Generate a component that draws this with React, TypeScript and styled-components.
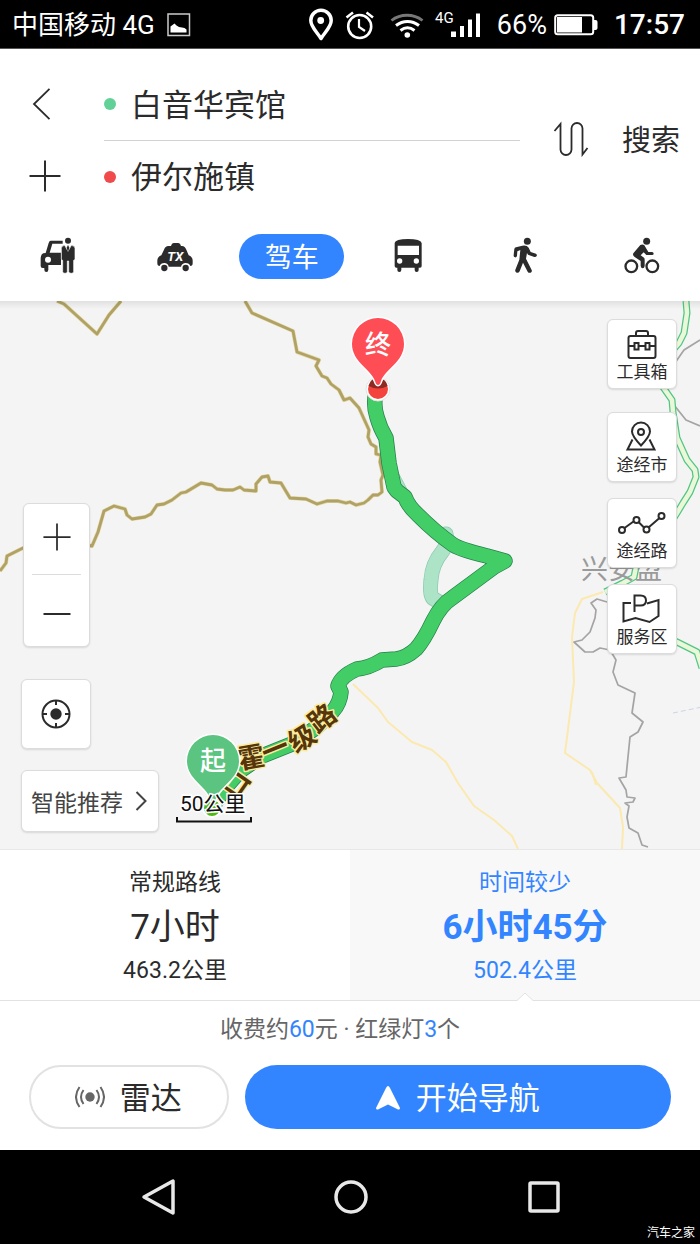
import React, { useState } from "react";
import styled, { createGlobalStyle, css } from "styled-components";

const GlobalStyle = createGlobalStyle`
  * { box-sizing: border-box; }
  body {
    margin: 0;
    background: #fff;
    color: #2b2b2b;
    font-family: Roboto, "Noto Sans CJK SC", sans-serif;
  }
  button, input {
    margin: 0;
    padding: 0;
    border: 0;
    background: none;
    color: inherit;
    font: inherit;
  }
  button { cursor: pointer; }
  svg { display: block; flex: none; }
`;

const blue = "#3385ff";
const ink = "#2b2b2b";

const Screen = styled.div`
  display: flex;
  flex-direction: column;
  min-height: 100vh;
`;

/* ---------- status bar ---------- */

const StatusBar = styled.div`
  display: flex;
  align-items: center;
  justify-content: space-between;
  height: 49px;
  padding: 2px 15px 0 12px;
  background: #000;
  color: #fff;
  border-bottom: 1px solid #555;
`;

const StatusGroup = styled.div`
  display: flex;
  align-items: center;
`;

const Carrier = styled.span`
  margin-right: 12px;
  font-size: 26px;
  line-height: 46px;
`;

const Battery = styled.span`
  margin: 0 7px 0 15px;
  font-size: 27px;
  line-height: 46px;
`;

const Clock = styled.time`
  margin-left: 16px;
  font-size: 28px;
  font-weight: 500;
  line-height: 46px;
`;

/* ---------- search header ---------- */

const Header = styled.header`
  display: flex;
  padding: 19px 20px 0 0;
`;

const SideActions = styled.div`
  display: flex;
  flex-direction: column;
  width: 104px;
`;

const SideButton = styled.button`
  display: flex;
  align-items: center;
  height: 72px;
  padding-left: 29px;
`;

const Fields = styled.div`
  flex: 1;
  min-width: 0;
`;

const Field = styled.label<{ $divided?: boolean }>`
  display: flex;
  align-items: center;
  height: ${(p) => (p.$divided ? 73 : 71)}px;
  gap: 15px;
  border-bottom: ${(p) => (p.$divided ? "1px solid #d2d2d2" : "0")};
`;

const Dot = styled.span<{ $color: string }>`
  flex: none;
  width: 12px;
  height: 12px;
  border-radius: 50%;
  background: ${(p) => p.$color};
`;

const PlaceInput = styled.input`
  flex: 1;
  min-width: 0;
  height: 60px;
  padding-bottom: 4px;
  font-size: 31px;
  outline: none;
`;

const SwapButton = styled.button`
  display: flex;
  align-items: center;
  justify-content: center;
  width: 102px;
  padding-bottom: 2px;
`;

const SearchButton = styled.button`
  padding-bottom: 4px;
  font-size: 29px;
  white-space: nowrap;
`;

/* ---------- travel modes ---------- */

const Modes = styled.nav`
  display: grid;
  grid-template-columns: repeat(6, 1fr);
  align-items: center;
  justify-items: center;
  height: 89px;
  padding-bottom: 1px;
`;

const ModeButton = styled.button<{ $active?: boolean }>`
  display: flex;
  align-items: center;
  justify-content: center;
  height: 45px;
  ${(p) =>
    p.$active &&
    css`
      width: 105px;
      padding-bottom: 2px;
      border-radius: 23px;
      background: ${blue};
      color: #fff;
      font-size: 27px;
    `}
`;

/* ---------- map ---------- */

const MapArea = styled.main`
  position: relative;
  display: flex;
  flex: 1;
  justify-content: space-between;
  min-height: 548px;
  padding: 18px 23px 17px 21px;
  background: #f4f4f4;

  &::before {
    content: "";
    position: absolute;
    inset: 0 0 auto 0;
    z-index: 1;
    height: 8px;
    background: linear-gradient(rgba(0, 0, 0, 0.08), rgba(0, 0, 0, 0));
  }
`;

const MapCanvas = styled.svg`
  position: absolute;
  inset: 0;
  width: 100%;
  height: 100%;
`;

const Column = styled.div<{ $end?: boolean }>`
  position: relative;
  display: flex;
  flex-direction: column;
  justify-content: ${(p) => (p.$end ? "flex-end" : "flex-start")};
  align-items: flex-start;
`;

const card = css`
  background: #fff;
  border: 1px solid #dcdcdc;
  border-radius: 6px;
  box-shadow: 0 1px 2px rgba(0, 0, 0, 0.12);
`;

const ZoomCard = styled.div`
  ${card}
  display: flex;
  flex-direction: column;
  width: 67px;
  height: 144px;
  margin: 0 0 32px 2px;
  padding: 0 8px;
`;

const ZoomButton = styled.button`
  display: flex;
  align-items: center;
  justify-content: center;
  height: 70px;
  padding-bottom: 4px;
  & + & {
    height: 72px;
    padding: 7px 0 0;
    border-top: 1px solid #dcdcdc;
  }
`;

const LocateButton = styled.button`
  ${card}
  display: flex;
  align-items: center;
  justify-content: center;
  width: 70px;
  height: 70px;
  margin-bottom: 21px;
`;

const SmartButton = styled.button`
  ${card}
  display: flex;
  align-items: center;
  gap: 12px;
  height: 62px;
  padding: 0 11px 0 9px;
  color: #444;
  font-size: 23px;
  white-space: nowrap;
`;

const ToolButton = styled.button`
  ${card}
  display: flex;
  flex-direction: column;
  align-items: center;
  width: 70px;
  height: 70px;
  margin-bottom: 16px;
  padding-top: 8px;
  font-size: 17px;
  line-height: 24px;
  &:first-child { margin-bottom: 23px; }
`;

/* ---------- route choice ---------- */

const Routes = styled.section`
  display: grid;
  grid-template-columns: 1fr 1fr;
  border-top: 1px solid #e8e8e8;
  border-bottom: 1px solid #e2e2e2;
`;

const RouteOption = styled.button<{ $active?: boolean }>`
  position: relative;
  display: flex;
  flex-direction: column;
  align-items: center;
  padding: 16px 0 14px;
  background: ${(p) => (p.$active ? "#f8f8f8" : "#fff")};
  color: ${(p) => (p.$active ? blue : ink)};
  strong { font-weight: ${(p) => (p.$active ? 700 : 400)}; }
`;

const RouteName = styled.span`
  font-size: 23px;
  line-height: 34px;
`;

const RouteTime = styled.strong`
  font-size: 35px;
  line-height: 56px;
`;

const RouteDistance = styled.span`
  font-size: 23px;
  line-height: 30px;
`;

const Pointer = styled.svg`
  position: absolute;
  bottom: -1px;
  left: 50%;
  margin-left: -8px;
`;

const Summary = styled.p`
  margin: 0;
  padding: 1px 20px 0 0;
  color: #666;
  font-size: 23px;
  line-height: 56px;
  text-align: center;
  em {
    color: ${blue};
    font-style: normal;
  }
`;

const Actions = styled.div`
  display: grid;
  grid-template-columns: 8fr 17fr;
  gap: 16px;
  padding: 7px 29px 21px;
`;

const ActionButton = styled.button<{ $primary?: boolean }>`
  display: flex;
  align-items: center;
  justify-content: center;
  gap: 15px;
  height: 64px;
  padding-right: 2px;
  border: ${(p) => (p.$primary ? "0" : "2px solid #e2e2e2")};
  border-radius: 32px;
  background: ${(p) => (p.$primary ? blue : "#fff")};
  color: ${(p) => (p.$primary ? "#fff" : ink)};
  font-size: 31px;
  white-space: nowrap;
`;

const ActionLabel = styled.span`
  padding-bottom: 3px;
`;

/* ---------- system navigation ---------- */

const SystemNav = styled.footer`
  position: relative;
  display: grid;
  grid-template-columns: repeat(3, 1fr);
  align-items: center;
  height: 94px;
  padding: 0 60px 0 62px;
  background: #000;
`;

const SystemButton = styled.button`
  display: flex;
  justify-content: center;
`;

const Watermark = styled.span`
  position: absolute;
  right: 5px;
  bottom: 2px;
  color: #fff;
  font-size: 12px;
  line-height: 18px;
`;

/* ---------- icons ---------- */

const StatusIcons = () => (
  <svg width="174" height="40" viewBox="309 4 174 40" fill="none" stroke="#fff">
    <path d="M322 37.500C318 31 311.800 26 311.800 19.500a10.200 10.200 0 0 1 20.400 0C332.200 26 326 31 322 37.500z" strokeWidth="3.500" strokeLinejoin="round" />
    <circle cx="321.700" cy="19.500" r="3.400" fill="#fff" stroke="none" />
    <circle cx="360.700" cy="25.500" r="11.500" strokeWidth="2.600" />
    <path d="M360 18v8l6 4" strokeWidth="2.200" />
    <path d="M347.500 16.500l6.500-5M374 16.500l-6.500-5" strokeWidth="2.600" />
    <path d="M392.500 19.500c9-7 22-7 31 0" stroke="#777" strokeWidth="2.800" />
    <path d="M397 24.500c7-5.500 16-5.500 23 0" strokeWidth="3" />
    <path d="M401.500 29.500c4.500-3.500 9.500-3.500 14 0" strokeWidth="3" />
    <circle cx="408.300" cy="34" r="2.800" fill="#fff" stroke="none" />
    <text x="436" y="22" fill="#fff" stroke="none" fontSize="15" fontFamily="Roboto, sans-serif">4G</text>
    <path d="M463 36V25M471 36V18.500" strokeWidth="4" />
    <path d="M479 36V12.500" strokeWidth="4" />
    <path d="M454.500 36V30.500" strokeWidth="5" />
  </svg>
);

const PictureIcon = () => (
  <svg width="24" height="24" viewBox="0 0 24 24">
    <rect x="1" y="1" width="21.500" height="21.500" fill="none" stroke="#ccc" strokeWidth="1.500" />
    <path d="M3.500 19.500v-6l2-1.500 2-1.500 2 2 2.500 1.500 3 .5 2.500.5 2 1.500v3z" fill="#fff" />
  </svg>
);

const BatteryIcon = () => (
  <svg width="44" height="22" viewBox="0 0 44 22">
    <rect x="1.200" y="1.200" width="38" height="19" rx="2.500" fill="none" stroke="#fff" strokeWidth="2" />
    <rect x="3" y="3" width="25" height="15.500" fill="#fff" />
    <path d="M40 6h1.500a2 2 0 0 1 2 2v6a2 2 0 0 1-2 2H40z" fill="#fff" />
  </svg>
);

const BackIcon = () => (
  <svg width="32" height="32" viewBox="0 0 32 32" fill="none" stroke={ink} strokeWidth="1.800">
    <path d="M20.500 .800L5 16l15.500 15.200" />
  </svg>
);

const PlusIcon = ({ size }: { size: number }) => (
  <svg width={size} height={size} viewBox="0 0 32 32" fill="none" stroke={ink} strokeWidth="2">
    <path d="M16 .5v31M.5 16h31" />
  </svg>
);

const MinusIcon = () => (
  <svg width="28" height="28" viewBox="0 0 28 28" fill="none" stroke={ink} strokeWidth="2">
    <path d="M.5 14h27" />
  </svg>
);

const SwapIcon = () => (
  <svg width="36" height="36" viewBox="0 0 36 36" fill="none" stroke={ink} strokeWidth="1.800">
    <path d="M1.500 10L7.500 3v25.500a5.500 5.500 0 0 0 11 0V7.500a5.500 5.500 0 0 1 11 0V33.500l5-6.500" />
  </svg>
);

const ChauffeurIcon = () => (
  <svg width="40" height="40" viewBox="114 51 120 120" fill={ink}>
    <path d="M152 65h36v9h-31l-8 27h34v37h-38v14q0 7-6 7t-6-7v-5h-5q-6 0-6-6v-24q0-10 8-14l7-1 9-30q2-7 6-7z" />
    <circle cx="144" cy="122" r="9" fill="#fff" />
    <circle cx="204" cy="65" r="9" />
    <path d="M194 79l10 18 10-18q11 1 11 9v31q0 5-4 5v34q0 5-7 5t-8-5v-32h-4v32q0 5-7 5t-7-5v-34q-4 0-4-5V88q0-8 10-9z" stroke="#fff" strokeWidth="2" />
    <path d="M204 78l4 8-4 13-4-13z" />
  </svg>
);

const TaxiIcon = () => (
  <svg width="40" height="40" viewBox="465 51 120 120" fill={ink}>
    <path d="M513 81q2-9 8-9h14q6 0 8 9h3q9 1 13 11l7 17q11 4 12 15v9q0 8-7 8-3-9-14-9t-14 11h-37q-2-11-13-11t-14 9q-7 0-7-8v-9q1-11 12-15l8-17q4-11 13-11z" />
    <circle cx="493" cy="147" r="9.500" />
    <circle cx="557" cy="147" r="9.500" />
    <text x="502" y="127" fill="#fff" fontSize="39" fontWeight="700" fontStyle="italic" fontFamily="Roboto, sans-serif">TX</text>
  </svg>
);

const BusIcon = () => (
  <svg width="40" height="40" viewBox="115 51 120 120" fill={ink}>
    <path fillRule="evenodd" d="M135 72q2-12 40-12t41 12v69q0 5-5 5h-4v7q0 6-6 6t-6-6v-7h-40v7q0 6-6 6t-6-6v-7h-3q-5 0-5-5zM144 80v28h64V80z" />
    <circle cx="150" cy="126" r="8" fill="#fff" />
    <circle cx="200" cy="126" r="8" fill="#fff" />
  </svg>
);

const WalkIcon = () => (
  <svg width="40" height="40" viewBox="465 51 120 120" fill={ink}>
    <circle cx="532" cy="67" r="10.500" />
    <path d="M517 80q14-2 19 6l6 13 16 5q4 3 2 7-2 4-7 3l-19-7-3-5-3 17 17 34q2 6-3 8-6 2-9-3l-14-27-10 26q-4 6-9 4-6-3-4-9l12-30 3-29-9 4-1 14q-2 5-6 4-5-1-4-7l2-18q1-4 5-5z" />
  </svg>
);

const BikeIcon = () => (
  <svg width="40" height="40" viewBox="815 51 120 120" fill={ink}>
    <circle cx="889" cy="67" r="10.500" />
    <path d="M870 78q7-4 12 1l12 20h11q5 1 5 5t-5 4h-17l-8-8-9 9 10 7q2 2 2 6v19q-1 7-6 7t-6-7v-15l-18-12q-7-5-4-11z" />
    <circle cx="843" cy="142" r="17.500" fill="none" stroke={ink} strokeWidth="7" />
    <circle cx="906" cy="142" r="17.500" fill="none" stroke={ink} strokeWidth="7" />
  </svg>
);

const LocateIcon = () => (
  <svg width="32" height="32" viewBox="0 0 32 32" fill="none" stroke={ink} strokeWidth="2">
    <circle cx="16" cy="16" r="13.500" />
    <circle cx="16" cy="16" r="5.700" fill={ink} stroke="none" />
    <path d="M16 2v5M16 25v5M2 16h5M25 16h5" />
  </svg>
);

const ChevronIcon = () => (
  <svg width="12" height="22" viewBox="0 0 12 22" fill="none" stroke="#444" strokeWidth="2">
    <path d="M1.500 2l9 9-9 9" />
  </svg>
);

const ToolIcon = ({ children }: { children: React.ReactNode }) => (
  <svg width="48" height="32" viewBox="0 0 48 32" fill="none" stroke={ink} strokeWidth="2">
    {children}
  </svg>
);

const RadarIcon = () => (
  <svg width="30" height="22" viewBox="0 0 30 22" fill="none" stroke="#666" strokeWidth="2">
    <circle cx="15" cy="11" r="4.700" fill="#666" stroke="none" />
    <path d="M8.500 4q-5 7 0 14M4.500 1q-7 10 0 20M21.500 4q5 7 0 14M25.500 1q7 10 0 20" />
  </svg>
);

const NavigateIcon = () => (
  <svg width="26" height="26" viewBox="0 0 26 26" fill="#fff">
    <path d="M13 2q1 0 2 2l10 20q0 2-2 1.500L13 20.500 3 25.500Q1 26 1 24L11 4q1-2 2-2z" />
  </svg>
);

/* ---------- map drawing ---------- */

const tanRoads = [
  "M57 301L64 304 97 334 109 315 121 301",
  "M245 301L252 313 293 331 297 352 319 360 316 366 322 376 327 378 331 384 339 390 344 400 350 398 359 408 369 430 368 437 371 444 376 447 376 454 381 455 380 462 383 475 381 480 382 492 378 495 373 495 368 500 364 503 356 505 350 502 346 503 338 501 327 501 317 504 306 499 290 498 281 483 270 482 268 476 262 477 256 484 256 491 244 490 240 487 233 490 225 490 217 489 212 485 201 483 186 492 181 493 172 500 164 504 157 505 151 514 145 517 132 519 127 515 125 509 114 506 104 511 98 532 92 546 60 540 23 548 7 556 6 563 0 571",
];

const greenRoads = [
  "M686 301L687 313 684 333 679 343 673 350 660 370 658 380 665 390 672 400 673 412 677 438 687 460 695 470 696 477 690 492 683 503 677 513 660 540 636 567 634 577 623 583 605 592",
  "M650 630L677 642 697 652 702 668",
];

const grayRoads = [
  "M670 370L684 350 700 340",
  "M674 405L686 420 700 426",
  "M607 602L597 599 591 603 596 610 595 618 590 632 582 640 574 642 585 652 593 652 600 648 610 650 616 660 613 672 618 685 635 693 632 713 643 722 638 732 630 737 626 777 619 778 626 790 627 797 635 798 633 802 625 803 629 806 627 817 629 828 638 833 642 845 648 847",
];

const yellowRoads = [
  "M603 592L582 599 575 613 572 637 574 682 565 753 590 770 597 783 620 808 623 827 622 849",
  "M592 772L596 785",
  "M353 684L378 708 388 722 412 742 432 750 446 762 458 783 474 806 494 820 512 836 518 849",
];

const route =
  "M376 392Q373 405 377 417Q380 428 386 438L389 463 394 487 397 491 405 497Q408 506 418 515Q435 532 452 544Q458 549 487 556L505 561 494 567 452 598Q441 605 433 621Q424 640 416 649Q406 658 396 659L382 660Q369 668 357 669Q341 676 338 686L341 692Q340 703 333 711L317 727 292 744 262 756 240 771 225 788 212 808";

const detour = "M393 478L402 495M446 534Q448 545 442 552Q432 564 431 580Q429 597 434 599L444 605";

const roadName = [
  { char: "口", x: 236, y: 784, turn: -55 },
  { char: "霍", x: 251, y: 757, turn: -10 },
  { char: "一", x: 275, y: 749, turn: -22 },
  { char: "级", x: 302, y: 738, turn: -32 },
  { char: "路", x: 322, y: 718, turn: -38 },
];

const pinPath = "M0 41Q-2 41-3 37C-7 25-26 18-26 0a26 26 0 0 1 52 0C26 18 7 25 3 37Q2 41 0 41z";
const cjk = '"Noto Sans CJK SC", sans-serif';

const RouteMap = () => (
  <MapCanvas viewBox="0 301 700 548" preserveAspectRatio="xMidYMid slice" role="img" aria-label="路线地图">
    <g fill="none" strokeLinejoin="round">
      {yellowRoads.map((d) => <path key={d} d={d} stroke="#fbe9b0" strokeWidth="2" />)}
      {grayRoads.map((d) => <path key={d} d={d} stroke="#a5a3a3" strokeWidth="1.700" />)}
      {tanRoads.map((d) => (
        <g key={d}>
          <path d={d} stroke="#e4d9a4" strokeWidth="4" />
          <path d={d} stroke="#b0a266" strokeWidth="2.800" />
        </g>
      ))}
      {greenRoads.map((d) => (
        <g key={d}>
          <path d={d} stroke="#50c684" strokeWidth="7" />
          <path d={d} stroke="#eaf7d8" strokeWidth="4.500" />
        </g>
      ))}
      <path d="M673 713L702 707" stroke="#cdd5e2" strokeWidth="1" strokeDasharray="5 3" />
    </g>
    <text x="581" y="579" fontSize="27" fill="#9a9a9a" fontFamily={cjk}>兴安盟</text>
    <g fill="none" strokeLinejoin="round" strokeLinecap="round">
      <path d={detour} stroke="#8fcbb0" strokeWidth="15" />
      <path d={detour} stroke="#ade4c8" strokeWidth="13.500" />
      <path d={route} stroke="#26804b" strokeWidth="15.500" />
      <path d={route} stroke="#43cd67" strokeWidth="14" />
    </g>
    <g fontSize="27" fontWeight="700" fontFamily={cjk} textAnchor="middle" fill="#553509" stroke="#fbeb9c" strokeWidth="3" strokeLinejoin="round" paintOrder="stroke">
      {roadName.map((c) => (
        <text key={c.char} transform={`translate(${c.x} ${c.y}) rotate(${c.turn})`} y="10">{c.char}</text>
      ))}
    </g>
    <circle cx="378" cy="389" r="12" fill="#fff" stroke="#e4e4e4" />
    <circle cx="378" cy="389" r="10" fill="#f4433c" />
    <path d="M368.500 386q2-6 5-7h9q4 2 5 7-9 5-19 0z" fill="#8e2a24" />
    <g transform="translate(378 344)">
      <path d={pinPath} fill="#ff4d55" stroke="#fff" strokeWidth="3" paintOrder="stroke" />
      <text y="10" fontSize="26" fontWeight="500" fill="#fff" textAnchor="middle" fontFamily={cjk}>终</text>
    </g>
    <circle cx="212" cy="808" r="9" fill="#4cb812" stroke="#fff" strokeWidth="2" />
    <g transform="translate(213 761)">
      <path d={pinPath} fill="#5ac480" stroke="#fff" strokeWidth="3" paintOrder="stroke" />
      <text y="9" fontSize="26" fontWeight="500" fill="#fff" textAnchor="middle" fontFamily={cjk}>起</text>
    </g>
    <text x="180" y="811" fontSize="21" fill="#111" stroke="#fff" strokeWidth="3" paintOrder="stroke" fontFamily='Roboto, "Noto Sans CJK SC", sans-serif'>50公里</text>
    <path d="M177 817v4.500h74V817" fill="none" stroke="#111" strokeWidth="2" />
  </MapCanvas>
);

/* ---------- page ---------- */

const modes = [
  { label: "代驾", icon: <ChauffeurIcon /> },
  { label: "打车", icon: <TaxiIcon /> },
  { label: "驾车", icon: null },
  { label: "公交", icon: <BusIcon /> },
  { label: "步行", icon: <WalkIcon /> },
  { label: "骑行", icon: <BikeIcon /> },
];

const tools = [
  {
    label: "工具箱",
    icon: (
      <ToolIcon>
        <rect x="10.500" y="8" width="27" height="22" rx="2" />
        <path d="M18 8V5q0-2 2-2h8q2 0 2 2v3M10.500 18h6M20.500 18h7M31.500 18h6" />
        <rect x="16.500" y="15" width="4" height="6.500" />
        <rect x="27.500" y="15" width="4" height="6.500" />
      </ToolIcon>
    ),
  },
  {
    label: "途经市",
    icon: (
      <ToolIcon>
        <path d="M23 24.500Q14 15 14 10.500a9 9 0 0 1 18 0Q32 15 23 24.500zM14.500 18.500L9.500 28.500h27l-5-10" />
        <circle cx="23" cy="11" r="3" />
      </ToolIcon>
    ),
  },
  {
    label: "途经路",
    icon: (
      <ToolIcon>
        <path d="M6.500 21l9-6.500M20.500 15l6 6M30.500 20.500l11-9.500" />
        <circle cx="4" cy="23" r="3" />
        <circle cx="18.500" cy="13" r="3" />
        <circle cx="28.500" cy="22.500" r="3" />
        <circle cx="43.500" cy="9" r="3" />
      </ToolIcon>
    ),
  },
  {
    label: "服务区",
    icon: (
      <ToolIcon>
        <path d="M13 10H5.500v18.500l12-3.500 14 4 9-6V7L29 10.500M16.500 19V2.500h6q5.500 0 5.500 5t-5.500 5h-6" />
      </ToolIcon>
    ),
  },
];

const routes = [
  { name: "常规路线", time: "7小时", distance: "463.2公里" },
  { name: "时间较少", time: "6小时45分", distance: "502.4公里" },
];

export default function App() {
  const [selected, setSelected] = useState(1);

  return (
    <Screen>
      <GlobalStyle />
      <StatusBar>
        <StatusGroup>
          <Carrier>中国移动 4G</Carrier>
          <PictureIcon />
        </StatusGroup>
        <StatusGroup>
          <StatusIcons />
          <Battery>66%</Battery>
          <BatteryIcon />
          <Clock>17:57</Clock>
        </StatusGroup>
      </StatusBar>

      <Header>
        <SideActions>
          <SideButton aria-label="返回"><BackIcon /></SideButton>
          <SideButton aria-label="添加途经点"><PlusIcon size={32} /></SideButton>
        </SideActions>
        <Fields>
          <Field $divided>
            <Dot $color="#62d197" />
            <PlaceInput aria-label="起点" defaultValue="白音华宾馆" />
          </Field>
          <Field>
            <Dot $color="#f04a4a" />
            <PlaceInput aria-label="终点" defaultValue="伊尔施镇" />
          </Field>
        </Fields>
        <SwapButton aria-label="交换起终点"><SwapIcon /></SwapButton>
        <SearchButton>搜索</SearchButton>
      </Header>

      <Modes>
        {modes.map((m) => (
          <ModeButton key={m.label} $active={!m.icon} aria-label={m.label} aria-pressed={!m.icon}>
            {m.icon ?? m.label}
          </ModeButton>
        ))}
      </Modes>

      <MapArea>
        <RouteMap />
        <Column $end>
          <ZoomCard>
            <ZoomButton aria-label="放大"><PlusIcon size={28} /></ZoomButton>
            <ZoomButton aria-label="缩小"><MinusIcon /></ZoomButton>
          </ZoomCard>
          <LocateButton aria-label="定位"><LocateIcon /></LocateButton>
          <SmartButton>智能推荐<ChevronIcon /></SmartButton>
        </Column>
        <Column>
          {tools.map((t) => (
            <ToolButton key={t.label}>
              {t.icon}
              {t.label}
            </ToolButton>
          ))}
        </Column>
      </MapArea>

      <Routes>
        {routes.map((r, i) => (
          <RouteOption key={r.name} $active={i === selected} onClick={() => setSelected(i)}>
            <RouteName>{r.name}</RouteName>
            <RouteTime>{r.time}</RouteTime>
            <RouteDistance>{r.distance}</RouteDistance>
            {i === selected && (
              <Pointer width="16" height="9" viewBox="0 0 16 9">
                <path d="M0 8.500L8 1l8 7.500V9H0z" fill="#fff" />
                <path d="M0 8.500L8 1l8 7.500" fill="none" stroke="#e2e2e2" />
              </Pointer>
            )}
          </RouteOption>
        ))}
      </Routes>
      <Summary>
        收费约<em>60</em>元 · 红绿灯<em>3</em>个
      </Summary>
      <Actions>
        <ActionButton><RadarIcon /><ActionLabel>雷达</ActionLabel></ActionButton>
        <ActionButton $primary><NavigateIcon /><ActionLabel>开始导航</ActionLabel></ActionButton>
      </Actions>

      <SystemNav>
        <SystemButton aria-label="系统返回">
          <svg width="36" height="40" viewBox="0 0 36 40" fill="none" stroke="#e8e8e8" strokeWidth="3.500" strokeLinejoin="round">
            <path d="M33 4v32L4 20z" />
          </svg>
        </SystemButton>
        <SystemButton aria-label="主屏幕">
          <svg width="36" height="36" viewBox="0 0 36 36" fill="none" stroke="#e8e8e8" strokeWidth="3.500">
            <circle cx="18" cy="18" r="15" />
          </svg>
        </SystemButton>
        <SystemButton aria-label="最近任务">
          <svg width="36" height="36" viewBox="0 0 36 36" fill="none" stroke="#e8e8e8" strokeWidth="3.500">
            <rect x="4" y="4" width="28" height="28" rx="1" />
          </svg>
        </SystemButton>
        <Watermark>汽车之家</Watermark>
      </SystemNav>
    </Screen>
  );
}
